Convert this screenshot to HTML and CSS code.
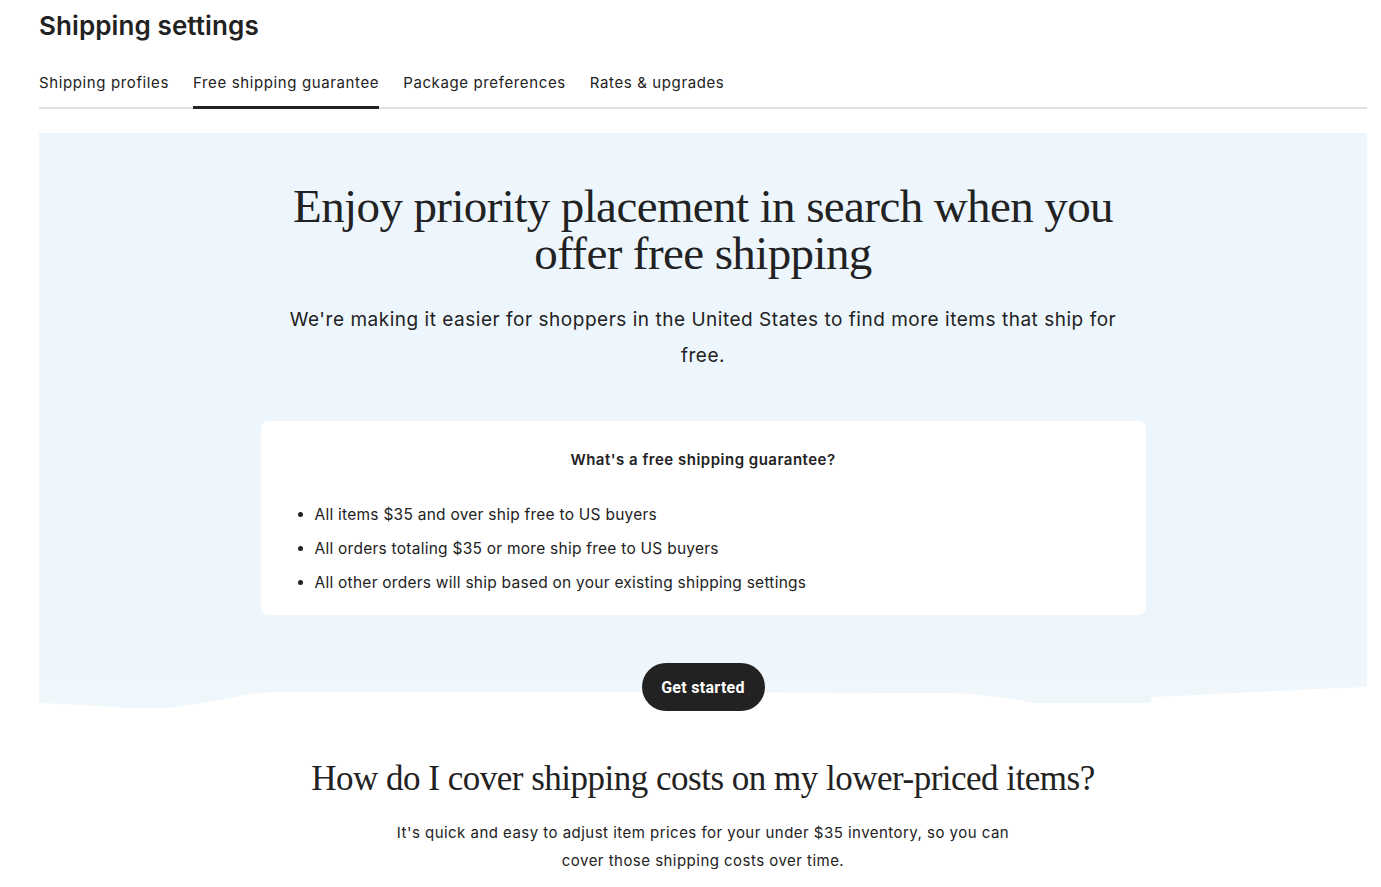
FILE: index.html
```html
<!DOCTYPE html>
<html lang="en">
<head>
<meta charset="utf-8">
<title>Shipping settings</title>
<link rel="stylesheet" href="styles.css">
</head>
<body>
<div class="page">
  <h1 class="title">Shipping settings</h1>
  <nav class="tabs">
    <a class="tab">Shipping profiles</a>
    <a class="tab active">Free shipping guarantee</a>
    <a class="tab">Package preferences</a>
    <a class="tab">Rates &amp; upgrades</a>
  </nav>

  <section class="hero">
    <h2 class="hero-title">Enjoy priority placement in search when you offer free shipping</h2>
    <p class="hero-text">We're making it easier for shoppers in the United States to find more items that ship for free.</p>
    <div class="card">
      <h3 class="card-title">What's a free shipping guarantee?</h3>
      <ul class="card-list">
        <li>All items $35 and over ship free to US buyers</li>
        <li>All orders totaling $35 or more ship free to US buyers</li>
        <li>All other orders will ship based on your existing shipping settings</li>
      </ul>
    </div>
  </section>
  <div class="hero-bottom">
    <svg class="wave" viewBox="0 0 1328 50" preserveAspectRatio="none" aria-hidden="true">
      <defs>
        <linearGradient id="wg" x1="0" y1="0" x2="0" y2="1">
          <stop offset="0" stop-color="#eef6fd"/>
          <stop offset="0.3" stop-color="#eff7fc"/>
          <stop offset="1" stop-color="#f0f7fb"/>
        </linearGradient>
      </defs>
      <path d="M0 0 H1328 V24 C1250 27 1180 31 1114 34 L1111 40 L995 40 C975 37 960 32 911 30 L291 29 C260 29 235 29 218 30 C180 36 150 44 121 45 L91 45 C60 43 30 41 0 40 Z" fill="url(#wg)"/>
    </svg>
    <button class="btn">Get started</button>
  </div>

  <section class="info">
    <h2 class="info-title">How do I cover shipping costs on my lower-priced items?</h2>
    <p class="info-text">It's quick and easy to adjust item prices for your under $35 inventory, so you can cover those shipping costs over time.</p>
  </section>
</div>
</body>
</html>
```

FILE: styles.css
```css
* { box-sizing: border-box; }
html, body { margin: 0; padding: 0; background: #fff; }
body {
  font-family: Inter, "Noto Sans", "Liberation Sans", sans-serif;
  color: #222;
}
.page {
  padding: 0 14px 0 39px;
}
.title {
  margin: 0;
  padding-top: 9px;
  font-size: 26px;
  line-height: 34px;
  font-weight: 600;
  letter-spacing: 0.1px;
}
.tabs {
  display: flex;
  gap: 24px;
  margin-top: 26px;
  border-bottom: 2px solid #e1e1e1;
}
.tab {
  font-size: 15px;
  line-height: 20px;
  padding: 4px 0 13px;
  margin-bottom: -2px;
  border-bottom: 3px solid transparent;
  color: #222;
  letter-spacing: 0.62px;
}
.tab.active { border-bottom-color: #222; }

.hero {
  margin-top: 24px;
  background: #eef6fd;
  display: flex;
  flex-direction: column;
  align-items: center;
  padding: 50px 0 48px;
}
.hero-title {
  margin: 0;
  max-width: 860px;
  text-align: center;
  font-family: "Liberation Serif", serif;
  font-weight: 400;
  font-size: 47px;
  line-height: 47px;
  letter-spacing: -0.6px;
  color: #222;
}
.hero-text {
  margin: 25px 0 0;
  max-width: 860px;
  text-align: center;
  font-size: 19px;
  line-height: 36px;
  letter-spacing: 0.52px;
}
.card {
  margin-top: 47px;
  width: 885px;
  background: #fff;
  border-radius: 8px;
  padding: 28px 40px 15px;
}
.card-title {
  margin: 0;
  text-align: center;
  font-size: 15px;
  line-height: 22px;
  font-weight: 600;
  letter-spacing: 0.5px;
}
.card-list {
  margin: 27px 0 0;
  padding-left: 14px;
  font-size: 15.5px;
  line-height: 34px;
  letter-spacing: 0.25px;
}
.hero-bottom {
  position: relative;
  display: flex;
  justify-content: center;
}
.wave {
  position: absolute;
  left: 0;
  top: 0;
  width: 100%;
  height: 50px;
  display: block;
}
.btn {
  position: relative;
  height: 48px;
  width: 123px;
  border: 0;
  border-radius: 24px;
  background: #222;
  color: #fff;
  font-family: Roboto, "Liberation Sans", sans-serif;
  font-weight: 700;
  font-size: 16px;
  letter-spacing: 0.3px;
}
.info {
  display: flex;
  flex-direction: column;
  align-items: center;
  padding-top: 48px;
}
.info-title {
  margin: 0;
  font-family: "Liberation Serif", serif;
  font-weight: 400;
  font-size: 35px;
  line-height: 40px;
  letter-spacing: -0.5px;
  color: #222;
}
.info-text {
  margin: 20px 0 0;
  max-width: 640px;
  text-align: center;
  font-size: 15px;
  line-height: 28px;
  letter-spacing: 0.47px;
}
```
